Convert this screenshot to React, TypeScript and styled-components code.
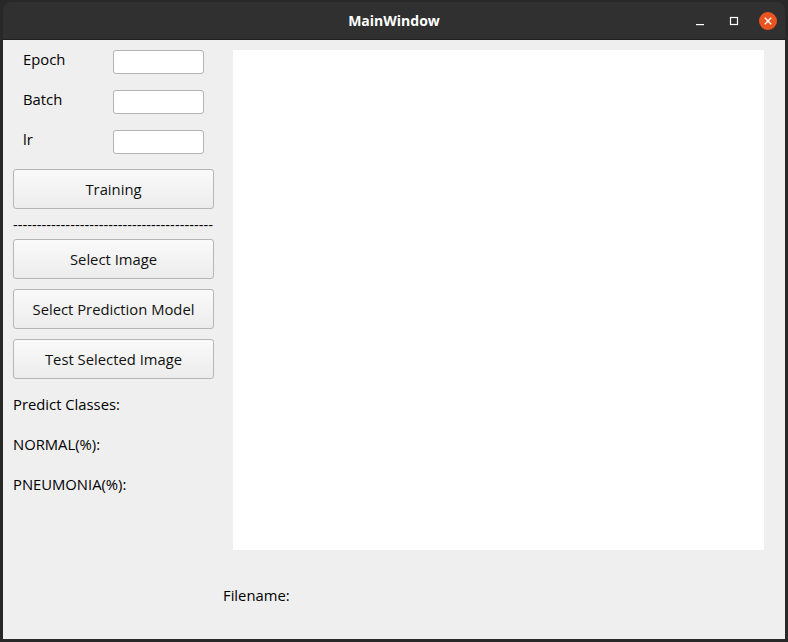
import React from "react";
import styled, { createGlobalStyle } from "styled-components";

const Global = createGlobalStyle`
  html, body { margin: 0; padding: 0; background: #262626; }
  body { font-family: "Open Sans", "Noto Sans", "DejaVu Sans", sans-serif; }
`;

const Frame = styled.div`
  width: 788px;
  height: 642px;
  box-sizing: border-box;
  padding: 2px 3px 3px 3px;
  background: #282828;
  display: flex;
  flex-direction: column;
`;

const TitleBar = styled.div`
  height: 37px;
  background: #303030;
  border-radius: 8px 8px 0 0;
  display: flex;
  align-items: center;
  justify-content: center;
  position: relative;
  color: #ffffff;
  font-family: "Open Sans", "Noto Sans", sans-serif;
  font-weight: 700;
  font-size: 14px;
  border-bottom: 1px solid #1f1f1f;
`;

const Controls = styled.div`
  position: absolute;
  right: 0px;
  top: 0;
  height: 37px;
  display: flex;
  align-items: center;
`;

const CtrlBtn = styled.div`
  width: 34px;
  height: 37px;
  display: flex;
  align-items: center;
  justify-content: center;
`;

const CloseCircle = styled.div`
  width: 18px;
  height: 18px;
  border-radius: 50%;
  background: #e95420;
  display: flex;
  align-items: center;
  justify-content: center;
`;

const Content = styled.div`
  flex: 1;
  background: #efefef;
  display: flex;
  flex-direction: column;
  color: #000;
  font-size: 14.8px;
`;

const TopRow = styled.div`
  display: flex;
  padding: 10px 0 0 10px;
`;

const LeftPanel = styled.div`
  width: 201px;
  display: flex;
  flex-direction: column;
`;

const FormRows = styled.div`
  display: flex;
  flex-direction: column;
  gap: 16px;
`;

const FormRow = styled.div`
  display: flex;
  align-items: center;
  height: 24px;
`;

const FieldLabel = styled.span`
  width: 100px;
  padding-left: 10px;
  box-sizing: border-box;
  line-height: 20px;
  position: relative;
  top: -3px;
`;

const Field = styled.input`
  width: 91px;
  height: 24px;
  box-sizing: border-box;
  border: 1px solid #b4b4b4;
  border-radius: 3px;
  background: #ffffff;
  outline: none;
  padding: 0 4px;
  font-family: inherit;
  font-size: 14px;
`;

const Button = styled.button<{ $top: number }>`
  margin-top: ${(p) => p.$top}px;
  width: 201px;
  height: 40px;
  box-sizing: border-box;
  border: 1px solid #b6b6b6;
  border-radius: 3px;
  background: linear-gradient(to bottom, #fafafa, #ececec);
  font-family: "Open Sans", "Noto Sans", sans-serif;
  font-size: 14.8px;
  color: #111;
  padding: 0 0 1px 0;
`;

const Separator = styled.div`
  margin-top: 5px;
  height: 20px;
  line-height: 20px;
  white-space: nowrap;
`;

const InfoLabels = styled.div`
  display: flex;
  flex-direction: column;
  gap: 20px;
  margin-top: 15px;
`;

const InfoLabel = styled.div`
  height: 20px;
  line-height: 20px;
`;

const ImageBox = styled.div`
  margin-left: 19px;
  width: 531px;
  height: 500px;
  background: #ffffff;
`;

const FooterLabel = styled.div`
  padding: 35px 0 0 220px;
  line-height: 20px;
`;

export default function App() {
  return (
    <>
      <Global />
      <Frame>
        <TitleBar>
          MainWindow
          <Controls>
            <CtrlBtn>
              <svg width="12" height="12" viewBox="0 0 12 12">
                <rect x="2" y="9" width="8" height="1.2" fill="#fff" />
              </svg>
            </CtrlBtn>
            <CtrlBtn>
              <svg width="12" height="12" viewBox="0 0 12 12">
                <rect x="2.5" y="2.5" width="7" height="7" fill="none" stroke="#fff" strokeWidth="1.2" />
              </svg>
            </CtrlBtn>
            <CtrlBtn>
              <CloseCircle>
                <svg width="10" height="10" viewBox="0 0 10 10">
                  <path d="M1.8 1.8 L8.2 8.2 M8.2 1.8 L1.8 8.2" stroke="#fff" strokeWidth="1.4" />
                </svg>
              </CloseCircle>
            </CtrlBtn>
          </Controls>
        </TitleBar>
        <Content>
          <TopRow>
            <LeftPanel>
              <FormRows>
                <FormRow>
                  <FieldLabel>Epoch</FieldLabel>
                  <Field />
                </FormRow>
                <FormRow>
                  <FieldLabel>Batch</FieldLabel>
                  <Field />
                </FormRow>
                <FormRow>
                  <FieldLabel>lr</FieldLabel>
                  <Field />
                </FormRow>
              </FormRows>
              <Button $top={15}>Training</Button>
              <Separator>------------------------------------------</Separator>
              <Button $top={5}>Select Image</Button>
              <Button $top={10}>Select Prediction Model</Button>
              <Button $top={10}>Test Selected Image</Button>
              <InfoLabels>
                <InfoLabel>Predict Classes:</InfoLabel>
                <InfoLabel>NORMAL(%):</InfoLabel>
                <InfoLabel>PNEUMONIA(%):</InfoLabel>
              </InfoLabels>
            </LeftPanel>
            <ImageBox />
          </TopRow>
          <FooterLabel>Filename:</FooterLabel>
        </Content>
      </Frame>
    </>
  );
}
